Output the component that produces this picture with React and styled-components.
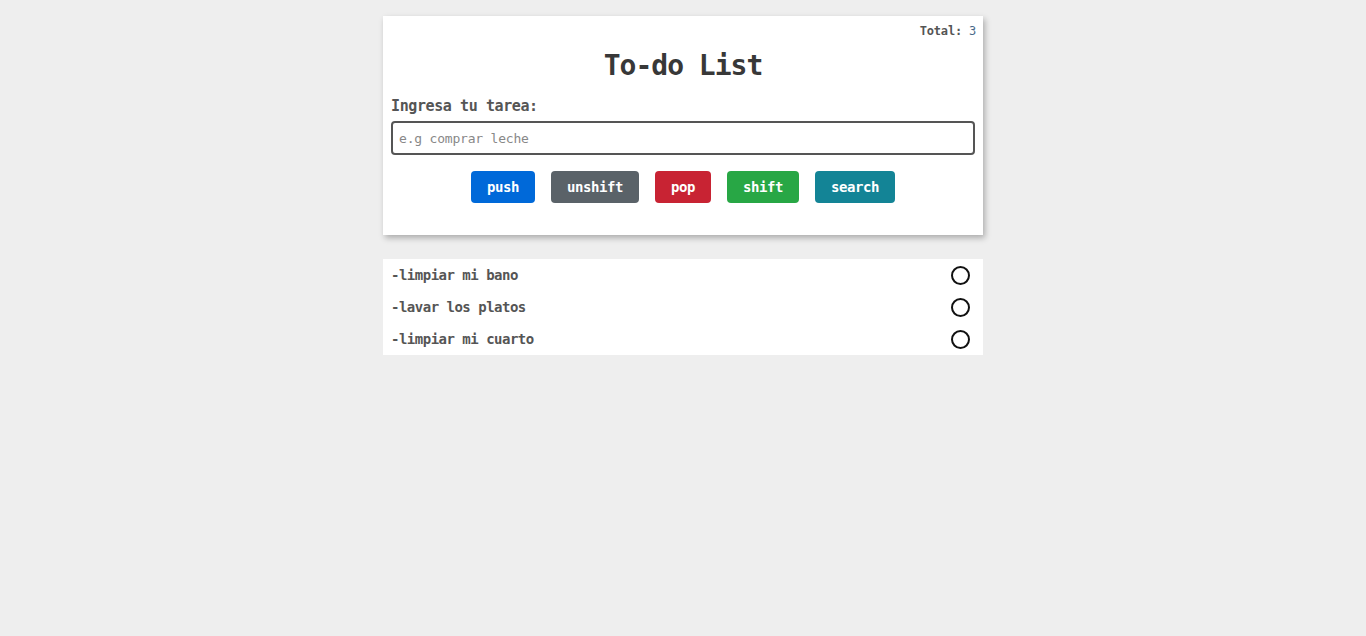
import React from 'react';
import styled, { createGlobalStyle } from 'styled-components';

const GlobalStyle = createGlobalStyle`
    body {
        margin: 0;
        background-color: #eeeeee;
        font-family: "DejaVu Sans Mono", "Liberation Mono", monospace;
    }
`;

const Page = styled.div`
    width: 600px;
    margin: 0 auto;
    padding-top: 16px;
`;

const Card = styled.div`
    background-color: white;
    padding: 8px 8px 32px 8px;
    box-shadow: 2px 3px 6px rgba(0, 0, 0, 0.28);
`;

const TotalRow = styled.div`
    text-align: right;
    font-size: 12px;
    letter-spacing: -0.2px;
    line-height: 14px;
    margin-right: -1px;
    color: #555;
`;

const TotalLabel = styled.span`
    font-weight: bold;
`;

const TotalCount = styled.span`
    color: #4a6a8a;
`;

const Title = styled.h1`
    margin: 10px 0 0 0;
    text-align: center;
    font-size: 28px;
    letter-spacing: -1px;
    line-height: 36px;
    color: #383838;
`;

const Label = styled.label`
    display: block;
    margin-top: 12px;
    font-size: 15px;
    letter-spacing: -0.4px;
    line-height: 20px;
    font-weight: bold;
    color: #555;
`;

const Input = styled.input`
    display: block;
    box-sizing: border-box;
    width: 100%;
    height: 34px;
    margin-top: 5px;
    padding: 0 6px;
    border: 2px solid #555;
    border-radius: 4px;
    font-family: inherit;
    font-size: 13px;
    letter-spacing: -0.2px;
    color: #333;
    outline: none;

    &::placeholder {
        color: #888;
    }
`;

const Buttons = styled.div`
    display: flex;
    justify-content: center;
    gap: 16px;
    margin-top: 16px;
`;

const Button = styled.button`
    height: 32px;
    padding: 0 16px;
    border: none;
    border-radius: 4px;
    background-color: ${props => props.bg};
    color: white;
    font-family: inherit;
    font-size: 14px;
    letter-spacing: -0.43px;
    font-weight: bold;
    cursor: pointer;
`;

const List = styled.ul`
    list-style: none;
    margin: 24px 0 0 0;
    padding: 0;
    background-color: white;
`;

const Item = styled.li`
    display: flex;
    align-items: center;
    justify-content: space-between;
    height: 32px;
    padding: 0 13px 0 8px;
    font-size: 14px;
    letter-spacing: -0.5px;
    font-weight: bold;
    color: #555;
`;

const Check = styled.span`
    box-sizing: border-box;
    width: 19px;
    height: 19px;
    border: 2px solid #111;
    border-radius: 50%;
`;

const buttons = [
    { label: 'push', bg: '#0069d9' },
    { label: 'unshift', bg: '#5a6268' },
    { label: 'pop', bg: '#c82333' },
    { label: 'shift', bg: '#28a745' },
    { label: 'search', bg: '#138496' },
];

const tasks = ['limpiar mi bano', 'lavar los platos', 'limpiar mi cuarto'];

const App = () => {
    return (
        <>
            <GlobalStyle />
            <Page>
                <Card>
                    <TotalRow>
                        <TotalLabel>Total:</TotalLabel> <TotalCount>{tasks.length}</TotalCount>
                    </TotalRow>
                    <Title>To-do List</Title>
                    <Label htmlFor="tarea">Ingresa tu tarea:</Label>
                    <Input id="tarea" placeholder="e.g comprar leche" />
                    <Buttons>
                        {buttons.map(b => (
                            <Button key={b.label} bg={b.bg}>{b.label}</Button>
                        ))}
                    </Buttons>
                </Card>
                <List>
                    {tasks.map(t => (
                        <Item key={t}>
                            <span>-{t}</span>
                            <Check />
                        </Item>
                    ))}
                </List>
            </Page>
        </>
    );
};

export default App;
